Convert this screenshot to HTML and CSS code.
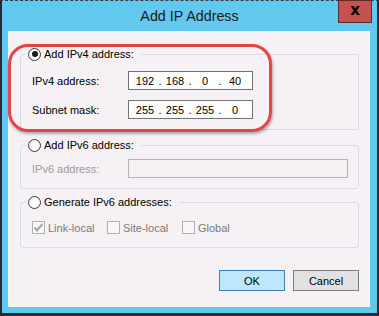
FILE: index.html
```html
<!DOCTYPE html>
<html>
<head>
  <meta charset="UTF-8">
  <title>Add IP Address</title>
  <link rel="stylesheet" href="styles.css">
</head>
<body>
  <div class="window">
    <div class="titlebar">
      <span></span>
      <span class="title">Add IP Address</span>
      <button class="close-button">x</button>
    </div>

    <div class="client">
      <!-- red highlight drawn over the IPv4 group -->
      <div class="highlight"></div>

      <div class="group group-v4">
        <div class="group-title">
          <span class="radio checked"></span>
          <span>Add IPv4 address:</span>
        </div>
        <div class="field-row">
          <span class="label">IPv4 address:</span>
          <div class="ip-box">
            <span class="octet">192</span><span class="dot">.</span>
            <span class="octet">168</span><span class="dot">.</span>
            <span class="octet">0</span><span class="dot">.</span>
            <span class="octet">40</span>
          </div>
        </div>
        <div class="field-row">
          <span class="label">Subnet mask:</span>
          <div class="ip-box">
            <span class="octet">255</span><span class="dot">.</span>
            <span class="octet">255</span><span class="dot">.</span>
            <span class="octet">255</span><span class="dot">.</span>
            <span class="octet">0</span>
          </div>
        </div>
      </div>

      <div class="group group-v6">
        <div class="group-title">
          <span class="radio"></span>
          <span>Add IPv6 address:</span>
        </div>
        <div class="field-row">
          <span class="label disabled">IPv6 address:</span>
          <div class="text-box disabled"></div>
        </div>
      </div>

      <div class="group group-gen">
        <div class="group-title">
          <span class="radio"></span>
          <span>Generate IPv6 addresses:</span>
        </div>
        <div class="check-row">
          <div class="check-item">
            <span class="checkbox">
              <svg width="11" height="11" viewBox="0 0 11 11"><path d="M1.5 5.5 L4 8.5 L9.5 2" fill="none" stroke="#a6a6a6" stroke-width="2"/></svg>
            </span>
            <span class="disabled-text">Link-local</span>
          </div>
          <div class="check-item">
            <span class="checkbox"></span>
            <span class="disabled-text">Site-local</span>
          </div>
          <div class="check-item">
            <span class="checkbox"></span>
            <span class="disabled-text">Global</span>
          </div>
        </div>
      </div>

      <div class="buttons">
        <button class="dlg-button default">OK</button>
        <button class="dlg-button">Cancel</button>
      </div>
    </div>
  </div>
</body>
</html>
```

FILE: styles.css
```css
body {
  margin: 0;
  font-family: "Liberation Sans", Arial, sans-serif;
  font-size: 11px;
  color: #000;
}
.window {
  width: 379px;
  height: 316px;
  box-sizing: border-box;
  background-color: #62c9ee;
  border-left: 2px solid #2b2b2b;
  border-right: 2px solid #2b2b2b;
  border-top: 1px dashed #3a3a3a;
  border-bottom: 3px solid #2b2b2b;
  display: flex;
  flex-direction: column;
}
.titlebar {
  height: 30px;
  display: grid;
  grid-template-columns: 1fr auto 1fr;
  align-items: center;
}
.title {
  font-size: 14.3px;
  color: #1a1a1a;
}
.close-button {
  justify-self: end;
  align-self: start;
  margin: -1px 5px 0 0;
  width: 34px;
  height: 23px;
  padding: 0 0 4px 0;
  background-color: #c75050;
  border: 1px solid #5a2c2c;
  font-family: "DejaVu Sans", sans-serif;
  font-weight: bold;
  font-size: 15px;
  color: #000;
  line-height: 14px;
}
.client {
  position: relative;
  margin: 0 7px 0 6px;
  height: 276px;
  box-sizing: border-box;
  background-color: #f5f1f5;
  padding: 23px 11px 0 12px;
}
.highlight {
  position: absolute;
  left: 0;
  top: 13px;
  width: 264px;
  height: 88px;
  box-sizing: border-box;
  border: 3px solid #e34448;
  border-radius: 20px;
  box-shadow: 1px 2px 3px rgba(0, 0, 0, 0.3);
  z-index: 2;
}
.group {
  border: 1px solid #d8dce1;
  border-radius: 3px;
  padding: 0 10px 10px 11px;
}
.group-v6 {
  margin-top: 15px;
}
.group-gen {
  margin-top: 13px;
  padding-bottom: 12px;
}
.group-title {
  display: flex;
  align-items: center;
  gap: 3px;
  width: max-content;
  height: 14px;
  margin: -8px 0 0 -6px;
  padding: 0 7px 0 2px;
  background-color: #f5f1f5;
}
.radio {
  width: 13px;
  height: 13px;
  box-sizing: border-box;
  border: 1px solid #3c3c3c;
  border-radius: 50%;
  background: radial-gradient(circle, #ffffff 40%, #e8e8e8);
  display: flex;
  align-items: center;
  justify-content: center;
}
.radio.checked::after {
  content: "";
  width: 6px;
  height: 6px;
  border-radius: 50%;
  background-color: #1a1a1a;
}
.field-row {
  display: flex;
  align-items: center;
  margin-top: 10px;
}
.group-v4 .field-row:first-of-type {
  margin-top: 5px;
}
.group-v6 .field-row {
  margin-top: 7px;
}
.label {
  width: 96px;
}
.label.disabled {
  color: #9a9a9a;
}
.disabled-text {
  color: #7a7a7a;
}
.ip-box {
  width: 125px;
  height: 19px;
  box-sizing: border-box;
  border: 1px solid #737373;
  background-color: #fff;
  padding-left: 4px;
  display: flex;
  align-items: center;
}
.octet {
  width: 24px;
  text-align: center;
}
.dot {
  width: 6px;
  text-align: center;
}
.text-box {
  width: 220px;
  height: 19px;
  box-sizing: border-box;
  border: 1px solid #b4b4b4;
}
.check-row {
  display: flex;
  margin-top: 11px;
  height: 15px;
}
.check-item {
  width: 75px;
  display: flex;
  align-items: center;
  gap: 3px;
}
.checkbox {
  width: 13px;
  height: 13px;
  box-sizing: border-box;
  border: 1px solid #b0b0b0;
  background-color: #f7f7f7;
  display: flex;
  align-items: center;
  justify-content: center;
}
.buttons {
  display: flex;
  justify-content: flex-end;
  gap: 8px;
  margin-top: 22px;
}
.dlg-button {
  width: 66px;
  height: 21px;
  padding: 0;
  font-family: "Liberation Sans", Arial, sans-serif;
  font-size: 11px;
  color: #000;
  background-color: #e1e1e1;
  border: 1px solid #7e7e7e;
}
.dlg-button.default {
  background-color: #bee6fd;
  border-color: #3c7fb1;
}
```
